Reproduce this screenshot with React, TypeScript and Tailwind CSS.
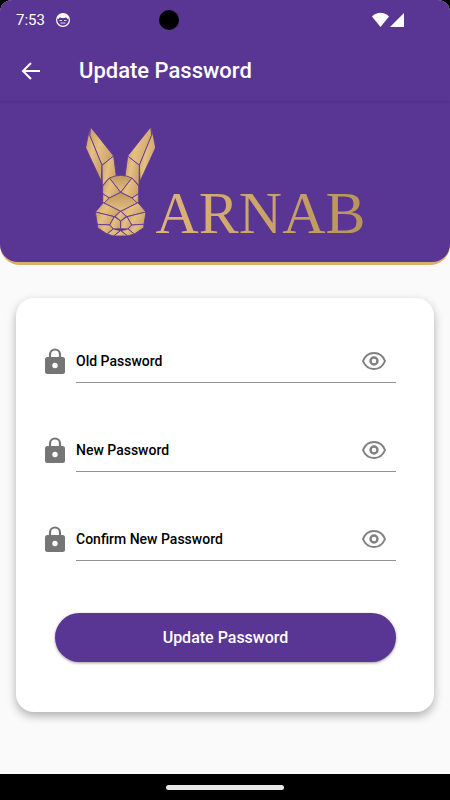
import { useState } from 'react'

const FIELDS = [
    { id: 'old-password', label: 'Old Password' },
    { id: 'new-password', label: 'New Password' },
    { id: 'confirm-password', label: 'Confirm New Password' },
]

function StatusBar() {
    return (
        <div className="grid h-10 grid-cols-3 items-center px-4 text-white">
            <div className="flex items-center gap-[10px]">
                <span className="text-[15px]">7:53</span>
                <svg viewBox="0 0 16 16" className="size-4">
                    <circle cx="8" cy="8" r="6.4" fill="none" stroke="white" strokeWidth="1.2" />
                    <path d="M2 6a6.4 6.4 0 0 1 12 0l-1.500 1-1.500-1.800-1.500.8h-3L5 5.200 3.500 7z" fill="white" />
                    <path d="M4.500 8.500h2.500M9 8.500h2.500M5.500 11h5" stroke="white" strokeWidth=".8" />
                </svg>
            </div>
            <div className="flex justify-center">
                <div className="mr-28 size-5 shrink-0 rounded-full bg-black" />
            </div>
            <div className="flex items-center justify-end pr-7">
                <svg viewBox="0 0 34 16" className="h-4 w-[34px]">
                    <path d="M0 4.500C5-.5 12-.5 17 4.500L8.500 15z" fill="white" />
                    <path d="M32 1v14H18z" fill="white" />
                </svg>
            </div>
        </div>
    )
}

function RabbitLogo() {
    return (
        <svg viewBox="21 20 207 330" className="h-[110px] w-[69px] shrink-0" aria-hidden="true">
            <defs>
                <linearGradient id="fur" x1="0" y1="0" x2="1" y2="0.4">
                    <stop offset="0" stopColor="#c59b5f" />
                    <stop offset="0.5" stopColor="#e6bf85" />
                    <stop offset="1" stopColor="#cfa56a" />
                </linearGradient>
                <linearGradient id="crown" x1="0" y1="0" x2="0" y2="1">
                    <stop offset="0" stopColor="#c0975c" />
                    <stop offset="1" stopColor="#e6bf85" />
                </linearGradient>
            </defs>
            <g fill="url(#fur)" stroke="#5a3694" strokeWidth="2.500" strokeLinejoin="round">
                <path d="M34 19L104 107L69 135L32 45z" />
                <path d="M34 19L32 45L69 135L67 183L20 82L26 52z" />
                <path d="M69 135L104 107L112 168L88 176L70 196z" />
                <path d="M216 19L146 107L181 135L218 45z" />
                <path d="M216 19L218 45L181 135L183 183L230 82L224 52z" />
                <path d="M181 135L146 107L138 168L162 176L180 196z" />
                <path d="M91 173Q125 157 159 173L125 216z" fill="url(#crown)" />
                <path d="M91 173L125 216L91 233L71 220V197z" />
                <path d="M159 173L125 216L159 233L179 220V197z" />
                <path d="M71 220L91 233L75 250L71 244z" />
                <path d="M179 220L159 233L175 250L179 244z" />
                <path d="M125 216L159 233L175 248L125 273L75 248L91 233z" fill="url(#crown)" />
                <path d="M73 247L125 273L106 289L49 275z" />
                <path d="M177 247L125 273L144 289L201 275z" />
                <path d="M49 275L106 289L92 314L55 312z" />
                <path d="M201 275L144 289L158 314L195 312z" />
                <path d="M125 273L108 288L125 302L142 288z" />
                <path d="M106 289L125 302V325L103 326L92 314z" />
                <path d="M144 289L125 302V325L147 326L158 314z" />
                <path d="M55 312L92 314L103 326L84 341L56 322z" />
                <path d="M195 312L158 314L147 326L166 341L194 322z" />
                <path d="M103 326L125 331L104 347L84 341z" />
                <path d="M147 326L125 331L146 347L166 341z" />
                <path d="M125 331L146 347H104z" />
            </g>
        </svg>
    )
}

function LockIcon() {
    return (
        <svg viewBox="0 0 20 26" className="h-[26px] w-5 shrink-0">
            <path d="M5 10V6.500a5 5 0 0 1 10 0V10" fill="none" stroke="#757575" strokeWidth="2.200" />
            <rect y="9" width="20" height="17" rx="2.500" fill="#757575" />
            <circle cx="10" cy="17.500" r="2.700" fill="white" />
        </svg>
    )
}

function EyeIcon() {
    return (
        <svg viewBox="0 0 24 18" className="h-[18px] w-6" fill="none" stroke="#808080" strokeWidth="2">
            <path d="M1 9C3 4 7 1 12 1s9 3 11 8c-2 5-6 8-11 8S3 14 1 9z" />
            <circle cx="12" cy="9" r="3.500" strokeWidth="2.400" />
        </svg>
    )
}

function PasswordField({ id, label }: { id: string; label: string }) {
    const [visible, setVisible] = useState(false)

    return (
        <div className="flex items-center gap-[11px]">
            <LockIcon />
            <div className="flex h-[45px] min-w-0 flex-1 items-center border-b border-[#929292] pt-[2px]">
                <input
                    id={id}
                    type={visible ? 'text' : 'password'}
                    aria-label={label}
                    placeholder={label}
                    className="min-w-0 flex-1 bg-transparent text-[14px] font-medium text-black outline-none placeholder:text-black"
                />
                <button
                    type="button"
                    aria-label={visible ? 'Hide password' : 'Show password'}
                    onClick={() => setVisible(!visible)}
                    className="mr-[10px]"
                >
                    <EyeIcon />
                </button>
            </div>
        </div>
    )
}

export default function App() {
    return (
        <div className="flex min-h-screen flex-col bg-black font-[Roboto,sans-serif]">
            <div className="flex flex-1 flex-col overflow-hidden rounded-t-xl bg-[#fafafa]">
                <header className="relative bg-[#5a3694] text-white shadow-[0_1px_2px_rgba(0,0,0,0.15)]">
                    <StatusBar />
                    <div className="flex h-[61px] items-center gap-[37px] px-5">
                        <button type="button" aria-label="Back">
                            <svg viewBox="0 0 22 22" className="size-[22px]" fill="none" stroke="white" strokeWidth="2">
                                <path d="M20 11H3M11 3l-8 8 8 8" />
                            </svg>
                        </button>
                        <h1 className="text-[22px] font-medium">Update Password</h1>
                    </div>
                </header>

                <div className="rounded-b-[20px] bg-[#dcae6b] pb-[3px]">
                    <div className="flex h-[161px] justify-center rounded-b-[18px] bg-[#5a3694] pt-[26px] pl-[2px]">
                        <RabbitLogo />
                        <span className="mt-[46px] bg-linear-to-r from-[#e0b577] to-[#b8945a] bg-clip-text font-['Liberation_Serif',serif] text-[60px] leading-[80px] text-transparent">
                            ARNAB
                        </span>
                    </div>
                </div>

                <main className="px-4 pt-[33px] pb-[62px]">
                    <form
                        onSubmit={e => e.preventDefault()}
                        className="rounded-[18px] bg-white pt-10 pr-[38px] pb-[50px] pl-[29px] shadow-[0_4px_10px_rgba(0,0,0,0.3)]"
                    >
                        <div className="flex flex-col gap-11">
                            {FIELDS.map(field => (
                                <PasswordField key={field.id} id={field.id} label={field.label} />
                            ))}
                        </div>
                        <button
                            type="submit"
                            className="mt-[52px] ml-[10px] flex h-[49px] w-[calc(100%-10px)] items-center justify-center rounded-full bg-[#5a3694] text-[16px] font-medium text-white shadow-[0_1px_3px_rgba(0,0,0,0.4)]"
                        >
                            Update Password
                        </button>
                    </form>
                </main>
            </div>
            <div className="flex h-[26px] items-center justify-center">
                <div className="h-[5px] w-[118px] rounded-full bg-[#e8e8e8]" />
            </div>
        </div>
    )
}
